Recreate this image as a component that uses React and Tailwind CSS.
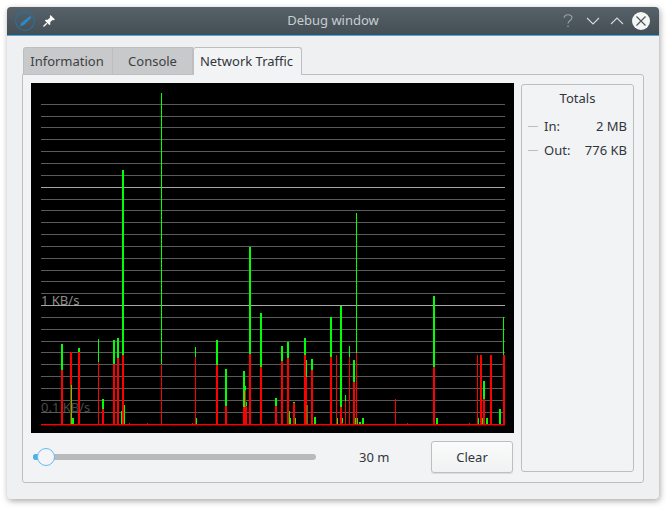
import React from 'react';

const gridRows = [104, 116, 127, 139, 151, 163, 175, 187, 199, 210, 222, 234, 246, 258, 270, 281, 293, 305, 317, 329, 341, 352, 364, 376, 388, 400, 412];
const brightRows = [187, 305];

// [x, width, green top, red top] in page pixels
const bars = [
  [61, 2, 344, 370], [70, 2, 352, 352], [71, 1, 385, 424], [72, 2, 418, 424], [78, 2, 348, 352],
  [98, 1, 339, 362], [102, 2, 399, 409], [113, 2, 340, 364], [117, 2, 338, 358], [122, 2, 170, 355],
  [121, 1, 411, 424], [124, 1, 405, 424], [161, 1, 93, 364], [195, 1, 347, 357], [196, 1, 418, 424],
  [216, 2, 340, 365], [225, 2, 369, 406], [243, 2, 371, 407], [245, 1, 386, 390], [246, 1, 402, 406],
  [249, 2, 247, 354], [260, 2, 313, 367], [275, 2, 398, 406], [281, 2, 346, 361], [287, 2, 342, 358],
  [289, 1, 411, 424], [290, 1, 418, 424], [293, 2, 402, 403], [295, 1, 418, 424], [304, 2, 338, 355],
  [306, 1, 360, 377], [311, 2, 359, 370], [314, 2, 417, 424], [330, 2, 317, 357], [336, 1, 355, 355],
  [337, 1, 418, 424], [340, 2, 306, 407], [342, 1, 418, 424], [345, 1, 395, 401], [349, 1, 346, 357],
  [353, 2, 360, 382], [356, 1, 213, 353], [355, 1, 418, 424], [357, 1, 418, 424], [359, 2, 422, 424],
  [362, 2, 418, 424], [395, 1, 399, 399], [433, 2, 296, 367], [436, 2, 418, 424], [477, 1, 355, 355],
  [478, 1, 418, 424], [480, 2, 355, 355], [482, 1, 418, 424], [483, 2, 381, 399], [486, 2, 418, 424],
  [490, 2, 355, 355], [499, 2, 409, 424], [503, 1, 317, 355], [504, 1, 355, 355],
];
const blips = [129, 147, 407, 469, 342, 192, 277];

function Chart() {
  return (
    <svg width="483" height="350" viewBox="31 83 483 350" className="block shrink-0 bg-black">
      <g shapeRendering="crispEdges">
        {gridRows.map((y) => (
          <rect key={y} x="41" y={y} width="464" height="1" fill={brightRows.includes(y) ? '#a6a6a6' : '#5a5a5a'} />
        ))}
        {bars.map(([x, w, g, r]) => (
          <g key={x + '-' + g}>
            <rect x={x} y={g} width={w} height={425 - g} fill="#00ff00" />
            {r < 424 && <rect x={x} y={r} width={w} height={425 - r} fill="#ff0000" />}
          </g>
        ))}
        <rect x="306" y="405" width="2" height="19" fill="#8a5a10" />
        {blips.map((x) => (
          <rect key={x} x={x} y="423" width="1" height="1" fill="#ff0000" />
        ))}
        <rect x="41" y="424" width="464" height="1" fill="#ff0000" />
      </g>
      <rect x="41" y="425" width="464" height="0.4" fill="#ff0000" />
      <text x="41" y="305" fontSize="13" fill="#8c8c8c" fontFamily="Noto Sans, sans-serif">1 KB/s</text>
      <text x="41" y="412" fontSize="13" fill="#4a4a4a" fontFamily="Noto Sans, sans-serif">0.1 KB/s</text>
    </svg>
  );
}

function Tab({ label, active, className }) {
  return (
    <div
      className={
        active
          ? 'flex h-[28px] items-center justify-center rounded-t-[3px] border border-b-0 border-[#bcbebf] bg-[#f2f3f5] text-[#31363b] -mb-px z-10 ' + className
          : 'flex h-[27px] items-center justify-center border-r border-t border-[#bcbebf] first:border-l first:rounded-tl-[3px] bg-[#c8c9ca] pt-px text-[#3c4145] ' + className
      }
    >
      {label}
    </div>
  );
}

function TotalRow({ label, value }) {
  return (
    <div className="flex h-[24px] items-center pl-[6px] pr-[6px]">
      <div className="h-px w-[10px] bg-[#bcbebf]" />
      <span className="ml-[6px]">{label}</span>
      <span className="ml-auto">{value}</span>
    </div>
  );
}

export default function App() {
  return (
    <div className="h-[511px] w-[672px] bg-white pl-[7px] pt-[7px] text-[13px] text-[#31363b]" style={{ fontFamily: '"Noto Sans", sans-serif' }}>
      <div className="flex h-[492px] w-[652px] flex-col overflow-hidden rounded-[4px] bg-[#eff0f1] shadow-[1px_2px_6px_rgba(0,0,0,0.35)]">
        <div className="grid h-[29px] shrink-0 grid-cols-[1fr_auto_1fr] items-center border-b border-[#3daee9] bg-gradient-to-b from-[#566169] to-[#454e55] px-[8px]">
          <div className="flex items-center gap-[5px]">
            <svg width="20" height="20" viewBox="0 0 20 20">
              <circle cx="10" cy="10" r="9.4" fill="none" stroke="#2a6f9e" strokeWidth="1.2" />
              <path d="M15 5 L16.5 6.5 L9 14 L5 15.5 L6 12 Z" fill="#2b88c9" />
            </svg>
            <svg width="14" height="14" viewBox="0 0 14 14" className="ml-[2px]">
              <path d="M8.5 1 L13 5.5 L11.7 6.2 L10.6 5.9 L8.2 8.3 L8.3 10.5 L7.3 11 L3 6.7 L3.5 5.7 L5.7 5.8 L8.1 3.4 L7.8 2.3 Z" fill="#fcfcfc" />
              <path d="M4.8 9.2 L1.5 12.5" stroke="#fcfcfc" strokeWidth="1.3" />
            </svg>
          </div>
          <div className="text-[#c9cdd0]">Debug window</div>
          <div className="flex items-center justify-end">
            <svg width="10" height="14" viewBox="0 0 10 14" className="mr-[13px]">
              <path d="M1 3.6 C1.4 1.6 3 0.7 5 0.7 C7.4 0.7 9 2 9 3.8 C9 6.6 5 6.4 5 9.6" fill="none" stroke="#9ca3a8" strokeWidth="1.1" />
              <rect x="4.4" y="11.6" width="1.2" height="1.4" fill="#9ca3a8" />
            </svg>
            <svg width="14" height="14" viewBox="0 0 14 14" className="mr-[10px]">
              <path d="M1 4 L7 10 L13 4" fill="none" stroke="#d5d8da" strokeWidth="1.1" />
            </svg>
            <svg width="14" height="14" viewBox="0 0 14 14" className="mr-[8px]">
              <path d="M1 10 L7 4 L13 10" fill="none" stroke="#d5d8da" strokeWidth="1.1" />
            </svg>
            <svg width="18" height="18" viewBox="0 0 18 18" className="mr-[1px]">
              <circle cx="9" cy="9" r="9" fill="#f4f5f5" />
              <path d="M4.5 4.5 L13.5 13.5 M13.5 4.5 L4.5 13.5" stroke="#4b555c" strokeWidth="1.2" />
            </svg>
          </div>
        </div>

        <div className="flex min-h-0 flex-1 flex-col pl-[15px] pr-[15px] pt-[11px]">
          <div className="flex pl-px">
            <Tab label="Information" className="w-[90px] pr-[2px]" />
            <Tab label="Console" className="w-[80px]" />
            <Tab label="Network Traffic" className="w-[109px] pr-[2px]" active />
          </div>
          <div className="flex h-[409px] gap-[7px] rounded-b-[3px] rounded-tr-[3px] border border-[#bcbebf] bg-[#f2f3f5] pl-[8px] pr-[9px] pt-[8px]">
            <div className="flex w-[483px] flex-col">
              <Chart />
              <div className="mt-[8px] flex h-[32px] items-center">
                <div className="relative ml-[2px] h-[6px] w-[283px] rounded-full bg-[#b9babc]">
                  <div className="absolute left-0 top-0 h-[6px] w-[8px] rounded-l-full bg-[#4fb0ec]" />
                  <div className="absolute left-[4px] top-[-6px] h-[18px] w-[18px] rounded-full border border-[#65bdee] bg-[#f4f5f6]" />
                </div>
                <span className="ml-[43px] pt-[2px]">30 m</span>
                <button className="ml-auto mr-px h-[32px] w-[82px] rounded-[3px] border border-[#bcbebf] bg-gradient-to-b from-[#fbfbfb] to-[#f0f1f2] pt-[2px] text-[#31363b] shadow-[0_1px_1px_rgba(0,0,0,0.1)]">
                  Clear
                </button>
              </div>
            </div>
            <div className="mt-px h-[388px] w-[113px] rounded-[3px] border border-[#bcbebf] bg-[#f2f3f5]">
              <div className="mt-[4px] mb-[6px] text-center">Totals</div>
              <TotalRow label="In:" value="2 MB" />
              <TotalRow label="Out:" value="776 KB" />
            </div>
          </div>
        </div>
      </div>
    </div>
  );
}
